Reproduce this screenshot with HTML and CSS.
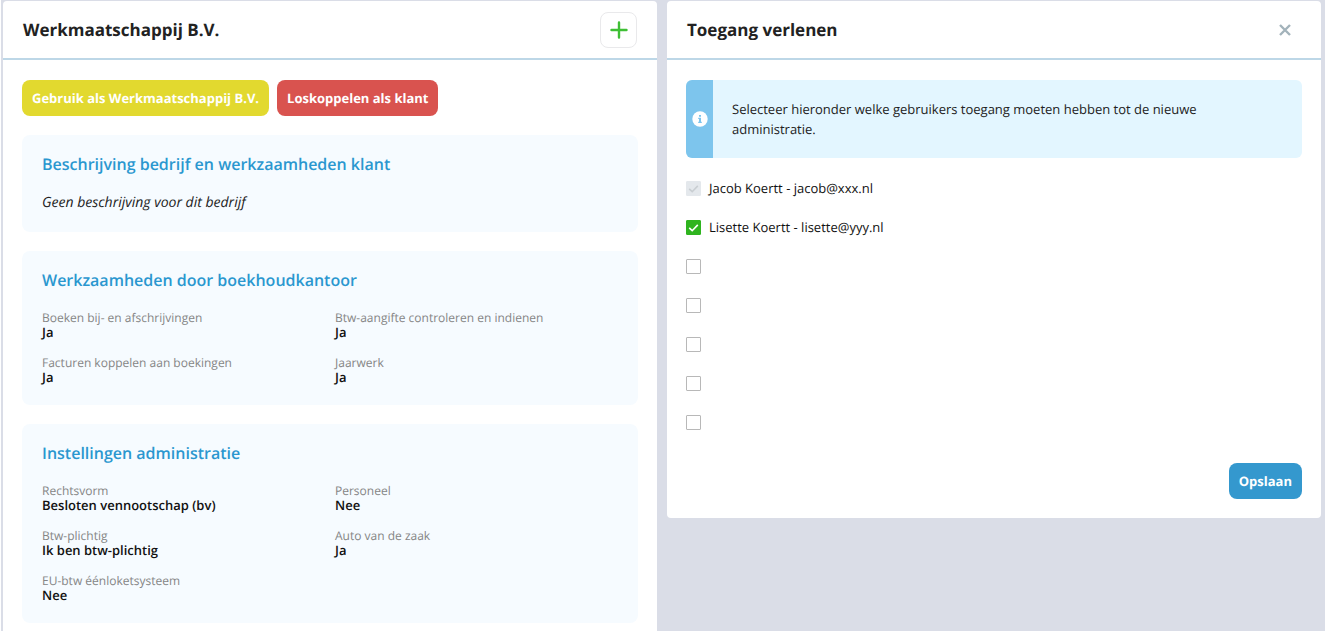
FILE: index.html
```html
<!DOCTYPE html>
<html lang="nl">
<head>
<meta charset="utf-8">
<title>Werkmaatschappij B.V.</title>
<link rel="stylesheet" href="styles.css">
</head>
<body>
<main class="page">
  <section class="panel panel-client">
    <header class="panel-header">
      <h1 class="panel-title">Werkmaatschappij B.V.</h1>
      <button class="add-button" type="button" aria-label="Toevoegen">
        <svg width="18" height="18" viewBox="0 0 18 18" fill="none" stroke="#3fbf35" stroke-width="2.4" stroke-linecap="round"><path d="M9 1.5v15M1.5 9h15"/></svg>
      </button>
    </header>
    <div class="panel-body">
      <div class="actions">
        <button class="button button-yellow" type="button">Gebruik als Werkmaatschappij B.V.</button>
        <button class="button button-red" type="button">Loskoppelen als klant</button>
      </div>
      <section class="card">
        <h2 class="card-title">Beschrijving bedrijf en werkzaamheden klant</h2>
        <p class="description">Geen beschrijving voor dit bedrijf</p>
      </section>
      <section class="card">
        <h2 class="card-title">Werkzaamheden door boekhoudkantoor</h2>
        <dl class="facts">
          <div><dt>Boeken bij- en afschrijvingen</dt><dd>Ja</dd></div>
          <div><dt>Btw-aangifte controleren en indienen</dt><dd>Ja</dd></div>
          <div><dt>Facturen koppelen aan boekingen</dt><dd>Ja</dd></div>
          <div><dt>Jaarwerk</dt><dd>Ja</dd></div>
        </dl>
      </section>
      <section class="card">
        <h2 class="card-title">Instellingen administratie</h2>
        <dl class="facts">
          <div><dt>Rechtsvorm</dt><dd>Besloten vennootschap (bv)</dd></div>
          <div><dt>Personeel</dt><dd>Nee</dd></div>
          <div><dt>Btw-plichtig</dt><dd>Ik ben btw-plichtig</dd></div>
          <div><dt>Auto van de zaak</dt><dd>Ja</dd></div>
          <div><dt>EU-btw éénloketsysteem</dt><dd>Nee</dd></div>
        </dl>
      </section>
    </div>
  </section>

  <section class="panel panel-access">
    <header class="panel-header">
      <h1 class="panel-title">Toegang verlenen</h1>
      <button class="close-button" type="button" aria-label="Sluiten">
        <svg width="12" height="12" viewBox="0 0 12 12" fill="none" stroke="#a3b3bb" stroke-width="2.4"><path d="M1 1l10 10M11 1l-10 10"/></svg>
      </button>
    </header>
    <form class="panel-body">
      <div class="notice">
        <div class="notice-strip">
          <svg width="16" height="16" viewBox="0 0 16 16"><circle cx="8" cy="8" r="7.7" fill="#fff"/><path d="M7 4h2v1.8H7zM6.2 6.8H9v4h.8V12H6.2v-1.2H7V8h-.8z" fill="#7dc5ed"/></svg>
        </div>
        <p class="notice-text">Selecteer hieronder welke gebruikers toegang moeten hebben tot de nieuwe administratie.</p>
      </div>
      <ul class="users">
        <li><label class="user"><input class="check" type="checkbox" checked disabled><svg class="tick" viewBox="0 0 15 15"><path d="M3.2 7.8l3 2.9 5.6-5.8"/></svg>Jacob Koertt - jacob@xxx.nl</label></li>
        <li><label class="user"><input class="check" type="checkbox" checked><svg class="tick" viewBox="0 0 15 15"><path d="M3.2 7.8l3 2.9 5.6-5.8"/></svg>Lisette Koertt - lisette@yyy.nl</label></li>
        <li class="user"><input class="check" type="checkbox" aria-label="Gebruiker 3"></li>
        <li class="user"><input class="check" type="checkbox" aria-label="Gebruiker 4"></li>
        <li class="user"><input class="check" type="checkbox" aria-label="Gebruiker 5"></li>
        <li class="user"><input class="check" type="checkbox" aria-label="Gebruiker 6"></li>
        <li class="user"><input class="check" type="checkbox" aria-label="Gebruiker 7"></li>
      </ul>
      <div class="form-footer">
        <button class="button button-blue" type="button">Opslaan</button>
      </div>
    </form>
  </section>
</main>
</body>
</html>
```
FILE: styles.css
```css
* { box-sizing: border-box; }

body {
  margin: 0;
  padding: 0 2px 1px 1px;
  background: #fff;
  color: #222;
  font-family: "Open Sans", sans-serif;
  font-size: 13px;
  line-height: 20px;
  text-rendering: geometricPrecision;
}

h1, h2, p, dl, dd, ul { margin: 0; padding: 0; }

button {
  margin: 0;
  font-family: inherit;
  text-rendering: inherit;
  cursor: pointer;
}

.page {
  display: grid;
  grid-template-columns: 1fr 1fr;
  gap: 10px;
  align-items: start;
  padding: 1px 4px 0 2px;
  background: #dadde7;
}

.panel {
  background: #fff;
  border-radius: 4px;
}

.panel-client { border-radius: 4px 4px 0 0; }

.panel-header {
  display: flex;
  align-items: center;
  justify-content: space-between;
  height: 59px;
  padding: 0 20px;
  border-bottom: 2px solid #bdd7e7;
}

.panel-title {
  font-size: 17px;
  font-weight: 700;
  line-height: 24px;
}

.add-button {
  display: flex;
  align-items: center;
  justify-content: center;
  width: 37px;
  height: 36px;
  padding: 0;
  border: 1px solid #e9e9eb;
  border-radius: 8px;
  background: #fff;
}

.close-button {
  display: flex;
  padding: 10px;
  border: 0;
  background: none;
}

.panel-body {
  display: flex;
  flex-direction: column;
  gap: 19px;
  padding: 20px 19px 19px;
}

.panel-client .panel-body { padding-bottom: 8px; }

.actions {
  display: flex;
  gap: 8px;
}

.button {
  height: 36px;
  padding: 0 10px;
  border: 0;
  border-radius: 8px;
  color: #fff;
  font-size: 13px;
  font-weight: 700;
  line-height: 20px;
}

.button-yellow { background: #e2d92f; }
.button-red { background: #d9534f; }
.button-blue { background: #3498ce; }

.card {
  padding: 19px 20px 20px;
  border-radius: 8px;
  background: #f6fbff;
}

.card-title {
  margin-bottom: 20px;
  color: #2a97cf;
  font-size: 16px;
  font-weight: 600;
  line-height: 20px;
}

.description {
  font-size: 14px;
  font-style: italic;
  line-height: 18px;
}

.facts {
  display: grid;
  grid-template-columns: 1fr 1fr;
  gap: 15px 10px;
  line-height: 15px;
}

.facts dt {
  color: #858585;
  font-size: 12px;
}

.facts dd {
  color: #111;
  font-weight: 600;
}

.notice {
  display: flex;
  overflow: hidden;
  border-radius: 6px;
  background: #e3f6ff;
}

.notice-strip {
  display: flex;
  flex: none;
  align-items: center;
  justify-content: center;
  width: 27px;
  background: #7dc5ed;
}

.notice-text { padding: 19px; }

.users {
  display: flex;
  flex-direction: column;
  gap: 19px;
  padding-top: 1px;
  list-style: none;
}

.user {
  display: flex;
  align-items: center;
  gap: 8px;
  height: 20px;
  position: relative;
  color: #111;
}

.check {
  appearance: none;
  width: 15px;
  height: 15px;
  margin: 0;
  border: 1px solid #b8b8b8;
  border-radius: 1px;
  background: #fff;
}

.check:checked {
  border-color: #2fb41f;
  background: #2fb41f;
}

.check:disabled {
  border-color: #e4e8ec;
  background: #e4e8ec;
}

/* The tick lies over its box. */
.tick {
  position: absolute;
  left: 0;
  width: 15px;
  height: 15px;
  fill: none;
  stroke: #fff;
  stroke-width: 1.6;
  pointer-events: none;
}

.check:disabled + .tick { stroke: #c9ced2; }

.form-footer {
  display: flex;
  justify-content: flex-end;
  padding-top: 12px;
}
```
